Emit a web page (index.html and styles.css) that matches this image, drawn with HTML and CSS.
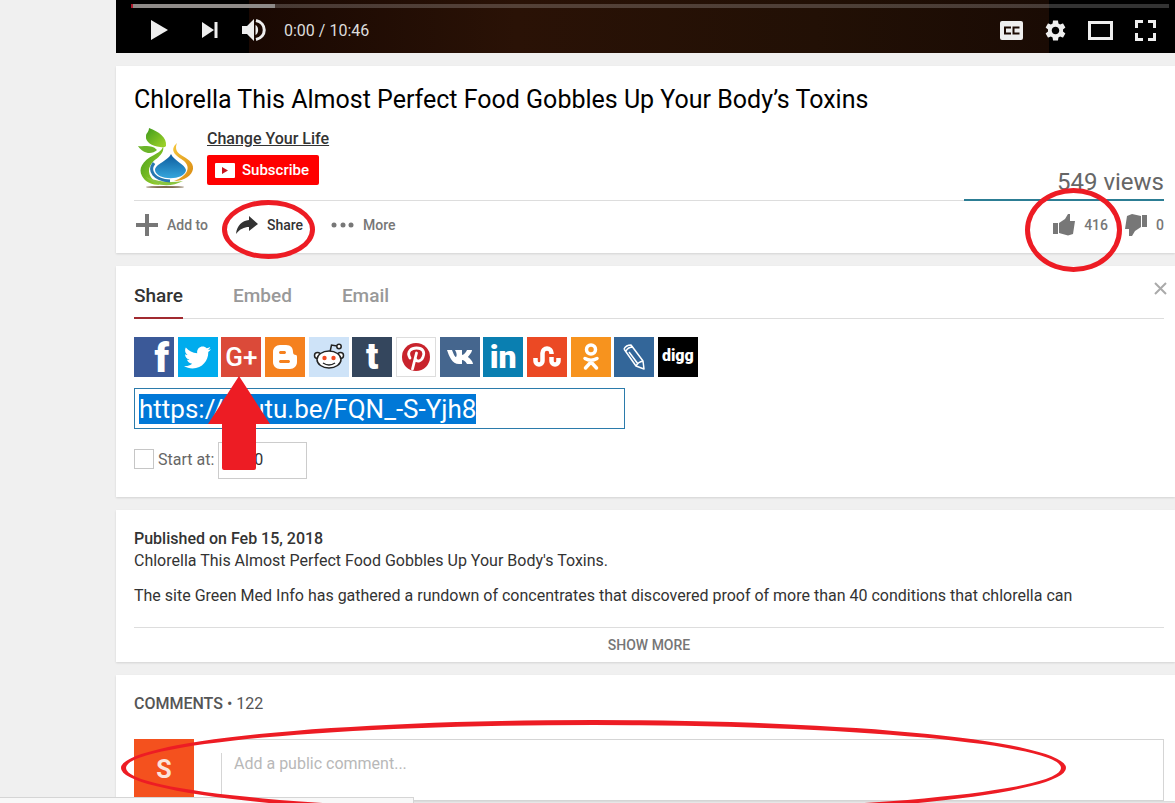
FILE: index.html
```html
<!DOCTYPE html>
<html lang="en">
<head>
    <meta charset="UTF-8">
    <meta name="viewport" content="width=device-width, initial-scale=1.0">
    <title>Chlorella This Almost Perfect Food Gobbles Up Your Body’s Toxins</title>
    <link rel="stylesheet" href="styles.css">
</head>
<body>
<main class="page">
    <!-- Player controls -->
    <section class="player">
        <div class="progress"><div class="loaded"></div></div>
        <div class="controls">
            <button class="ctl play" aria-label="Play"><svg width="17" height="20" viewBox="0 0 17 20"><path d="M0 0L17 10L0 20Z"/></svg></button>
            <button class="ctl next" aria-label="Next"><svg width="16" height="16" viewBox="0 0 16 16"><path d="M0 0L12 8L0 16ZM12.500 0H15.500V16H12.500Z"/></svg></button>
            <button class="ctl volume" aria-label="Mute"><svg width="24" height="22" viewBox="0 0 24 22"><path d="M0 7H5L12 0V22L5 15H0Z"/><path d="M13.500 6C17 7.500 17 14.500 13.500 16Z"/><path d="M14 1.500C25 4 25 18 14 20.500" class="wave"/></svg></button>
            <span class="time">0:00 / 10:46</span>
            <div class="controls-right">
                <button class="ctl" aria-label="Subtitles"><svg width="23" height="19" viewBox="0 0 23 19"><rect width="23" height="19" rx="2"/><path class="cc" d="M10 7.500V6.500H5V12.500H10V11.500M18.500 7.500V6.500H13.500V12.500H18.500V11.500"/></svg></button>
                <button class="ctl" aria-label="Settings"><svg width="21" height="21" viewBox="2 2 20 20"><path d="M19.140 12.940c.04-.3.06-.61.06-.94 0-.32-.02-.64-.07-.94l2.030-1.580c.18-.14.23-.41.12-.61l-1.920-3.320c-.12-.22-.37-.29-.59-.22l-2.390.96c-.5-.38-1.030-.7-1.620-.94l-.36-2.540c-.04-.24-.24-.41-.48-.41h-3.840c-.24 0-.43.17-.47.41l-.36 2.540c-.59.24-1.130.57-1.620.94l-2.390-.96c-.22-.08-.47 0-.59.22L2.740 8.870c-.12.21-.08.47.12.61l2.030 1.580c-.05.3-.09.63-.09.94s.02.64.07.94l-2.030 1.580c-.18.14-.23.41-.12.61l1.920 3.320c.12.22.37.29.59.22l2.390-.96c.5.38 1.030.7 1.620.94l.36 2.540c.05.24.24.41.48.41h3.840c.24 0 .44-.17.47-.41l.36-2.540c.59-.24 1.130-.56 1.620-.94l2.390.96c.22.08.47 0 .59-.22l1.920-3.320c.12-.22.07-.47-.12-.61l-2.010-1.580zM12 15.600c-1.980 0-3.600-1.620-3.600-3.600s1.620-3.600 3.600-3.600 3.600 1.620 3.600 3.600-1.620 3.600-3.600 3.600z"/></svg></button>
                <button class="ctl" aria-label="Theater mode"><svg width="25" height="19" viewBox="0 0 25 19"><path d="M0 0H25V19H0ZM3 3V16H22V3Z" fill-rule="evenodd"/></svg></button>
                <button class="ctl" aria-label="Full screen"><svg width="21" height="21" viewBox="0 0 21 21"><path d="M0 0H8V3H3V8H0ZM13 0H21V8H18V3H13ZM0 13H3V18H8V21H0ZM18 13H21V21H13V18H18Z"/></svg></button>
            </div>
        </div>
    </section>

    <!-- Title and actions -->
    <section class="card info">
        <h1>Chlorella This Almost Perfect Food Gobbles Up Your Body’s Toxins</h1>
        <div class="channel">
            <svg class="channel-logo" width="60" height="60" viewBox="0 0 60 60" role="img" aria-label="Change Your Life">
                <defs>
                    <linearGradient id="drop" x1="0" y1="0" x2="0" y2="1"><stop offset="0" stop-color="#0c5a9c"/><stop offset="1" stop-color="#36a6dc"/></linearGradient>
                    <linearGradient id="leaf" x1="0" y1="0" x2="1" y2="1"><stop offset="0" stop-color="#3f9a1c"/><stop offset="1" stop-color="#a5d62a"/></linearGradient>
                    <linearGradient id="gold" x1="0" y1="0" x2="1" y2="1"><stop offset="0" stop-color="#f5c63c"/><stop offset="1" stop-color="#d98a12"/></linearGradient>
                </defs>
                <path fill="url(#leaf)" d="M15 0C25 4 33 9 32 18Q31 20 26 19C18 18 11 14 12 8C12 5 15 4 15 0Z"/>
                <path fill="#6cb52a" d="M4 18C11 19 17 16 23 22C18 27 9 26 4 18Z"/>
                <path fill="url(#leaf)" d="M28 14C31 20 27 23 20 27C8 33 4 41 8 48C11 54 18 57 26 57C15 51 12 42 18 35C23 29 33 26 28 14Z"/>
                <path fill="#8bc53f" d="M12 49C20 58 36 60 49 53C37 55 24 54 12 49Z"/>
                <path fill="none" stroke="#2877b0" stroke-width="3" d="M20 35C14 43 20 52 36 53"/>
                <path fill="url(#gold)" d="M43 15C34 23 43 28 50 33C57 39 54 48 40 53C51 53 58 47 59 41C60 34 52 30 47 27C42 24 41 20 43 15Z"/>
                <path fill="url(#drop)" d="M37 26C34 33 21 36 21 42C22 53 51 53 52 42C51 36 40 33 37 26Z"/>
                <ellipse cx="31" cy="59" rx="19" ry="1" fill="#806b50"/>
            </svg>
            <div class="channel-text">
                <a href="#" class="channel-name">Change Your Life</a>
                <button class="subscribe"><svg width="20" height="15" viewBox="0 0 20 15"><rect width="20" height="15" rx="1" fill="#fff"/><path d="M7 4L13 7.500L7 11Z" fill="#c8141c"/></svg>Subscribe</button>
            </div>
            <div class="views">549 views</div>
        </div>
        <div class="actions">
            <button class="action"><svg width="22" height="22" viewBox="0 0 22 22"><path d="M9 0H13V9H22V13H13V22H9V13H0V9H9Z"/></svg>Add to</button>
            <button class="action active"><svg width="22" height="22" viewBox="0 0 22 22"><path d="M13 2L22 10L13 17V13C8 13 4 15 0 20C1 11 6 7 13 6Z"/></svg>Share<span class="ring share-ring"></span></button>
            <button class="action"><svg width="23" height="22" viewBox="0 0 23 22"><circle cx="3" cy="11" r="2.500"/><circle cx="12" cy="11" r="2.500"/><circle cx="20" cy="11" r="2.500"/></svg>More</button>
            <div class="votes">
                <button class="action"><svg width="22" height="22" viewBox="0 0 22 22"><path d="M0 9H5V20H0ZM6 9L12 5L15 0H17V7H22L20 20L15 21.500L6 19Z"/></svg>416<span class="ring like-ring"></span></button>
                <button class="action"><svg width="22" height="22" viewBox="0 0 22 22"><path d="M22 13H17V1H22ZM16 13L10 17L7 22H4V15H0L2 2L7 0L16 2Z"/></svg>0</button>
            </div>
        </div>
    </section>

    <!-- Share panel -->
    <section class="card share">
        <div class="tabs">
            <button class="tab selected">Share</button>
            <button class="tab">Embed</button>
            <button class="tab">Email</button>
            <button class="close" aria-label="Close"><svg width="13" height="13" viewBox="0 0 13 13"><path d="M1 1L12 12M12 1L1 12"/></svg></button>
        </div>
        <div class="services">
            <button class="service facebook">f</button>
            <button class="service twitter" aria-label="Twitter"><svg width="27" height="27" viewBox="0 0 24 24"><path fill="#fff" d="M23.954 4.569c-.885.389-1.830.654-2.825.775 1.014-.611 1.794-1.574 2.163-2.723-.951.555-2.005.959-3.127 1.184-.896-.959-2.173-1.559-3.591-1.559-2.717 0-4.920 2.203-4.920 4.917 0 .39.045.765.127 1.124C7.691 8.094 4.066 6.130 1.640 3.161c-.427.722-.666 1.561-.666 2.475 0 1.710.87 3.213 2.188 4.096-.807-.026-1.566-.248-2.228-.616v.061c0 2.385 1.693 4.374 3.946 4.827-.413.111-.849.171-1.296.171-.314 0-.615-.03-.916-.086.631 1.953 2.445 3.377 4.604 3.417-1.680 1.319-3.809 2.105-6.102 2.105-.39 0-.779-.023-1.170-.067 2.189 1.394 4.768 2.209 7.557 2.209 9.054 0 13.999-7.496 13.999-13.986 0-.209 0-.42-.015-.63.961-.689 1.800-1.560 2.460-2.548z"/></svg></button>
            <button class="service google">G+</button>
            <button class="service blogger" aria-label="Blogger"><svg width="26" height="26" viewBox="0 0 26 26"><path fill="#fff" fill-rule="evenodd" d="M8 1H14C19 1 21 4 21 8C21 10 22 11 24 11Q25 11 25 13V18C25 22 22 25 18 25H8C4 25 1 22 1 18V8C1 4 4 1 8 1ZM8 7Q6 8.500 8 10H13Q15 8.500 13 7ZM8 16Q6 17.500 8 19H17Q19 17.500 17 16Z"/></svg></button>
            <button class="service reddit" aria-label="Reddit"><svg width="32" height="32" viewBox="0 0 32 32"><g fill="#fff" stroke="#222" stroke-width="1.500"><path fill="none" d="M17 11L18.500 4L24 5"/><circle cx="26" cy="5.500" r="2.200"/><circle cx="4.500" cy="14.500" r="3"/><circle cx="27.500" cy="14.500" r="3"/><ellipse cx="16" cy="18.500" rx="12" ry="8.500"/><path fill="none" d="M10 22Q16 26 22 22"/></g><circle cx="11.500" cy="17" r="2.200" fill="#f04b23"/><circle cx="20.500" cy="17" r="2.200" fill="#f04b23"/></svg></button>
            <button class="service tumblr">t</button>
            <button class="service pinterest" aria-label="Pinterest"><svg width="28" height="28" viewBox="0 0 28 28"><circle cx="14" cy="14" r="14" fill="#c8232c"/><path fill="none" stroke="#fff" stroke-width="2.800" stroke-linecap="round" d="M8 15C4 8 10 5 14.500 5C21 5 23 9 21 14C19 19 14.500 19 13.500 16M14.500 10L10.500 26"/></svg></button>
            <button class="service vk" aria-label="VK"><svg width="26" height="16" viewBox="0 0 26 16"><path fill="#fff" d="M0 1H5C7 6 8 8 9 8C10 7 10 4 8 1H15V6C17 6 19 3 20 1H25C25 4 21 7 21 8C22 9 26 12 26 15H20C18 12 17 11 15 11V15H12C5 15 2 7 0 1Z"/></svg></button>
            <button class="service linkedin">in</button>
            <button class="service stumble" aria-label="StumbleUpon"><svg width="28" height="22" viewBox="0 0 28 22"><path fill="none" stroke="#fff" stroke-width="4.500" d="M2.500 12V15A3.500 3.500 0 0 0 9.500 15V7A4.500 4.500 0 0 1 18.500 7V8M18.500 11V15A3.500 3.500 0 0 0 25.500 15V12"/></svg></button>
            <button class="service ok" aria-label="Odnoklassniki"><svg width="18" height="28" viewBox="0 0 18 28"><g fill="none" stroke="#fff" stroke-width="3.500" stroke-linecap="round"><circle cx="9" cy="6.500" r="4.500"/><path d="M3 15.500Q9 19 15 15.500M9 19L3.500 25M9 19L14.500 25"/></g></svg></button>
            <button class="service livejournal" aria-label="LiveJournal"><svg width="24" height="28" viewBox="0 0 24 28"><path fill="none" stroke="#fff" stroke-width="1.500" stroke-linejoin="round" d="M2 6Q4 2 9 2L21 18L22 26L14 23L2 6M4 8Q6 4 11 4M14 23Q16 19 21 18M7 9L16 21"/></svg></button>
            <button class="service digg">digg</button>
        </div>
        <input class="share-url" id="share-url" type="text" aria-label="Video link" value="https://youtu.be/FQN_-S-Yjh8">
        <div class="start">
            <input type="checkbox" id="start-at" class="start-check">
            <label for="start-at">Start at:</label>
            <input type="text" class="start-time" aria-label="Start time" value="0:00">
        </div>
        <svg class="pointer" width="62" height="94" viewBox="0 0 62 94"><path fill="#ed1c24" d="M31 0L62 48H48V92Q48 94 46 94H16Q14 94 14 92V48H0Z"/></svg>
    </section>

    <!-- Description -->
    <section class="card description">
        <p class="published">Published on Feb 15, 2018</p>
        <p>Chlorella This Almost Perfect Food Gobbles Up Your Body's Toxins.</p>
        <p class="more-text">The site Green Med Info has gathered a rundown of concentrates that discovered proof of more than 40 conditions that chlorella can</p>
        <button class="show-more">SHOW MORE</button>
    </section>

    <!-- Comments -->
    <section class="card comments">
        <h2>COMMENTS <span>• 122</span></h2>
        <div class="comment-row">
            <div class="user">S</div>
            <div class="comment-field">
                <textarea class="comment-box" aria-label="Comment" placeholder="Add a public comment..."></textarea>
            </div>
        </div>
        <span class="ring comment-ring"></span>
    </section>
</main>
<div class="status"></div>

<script>
    const shareUrl = document.getElementById("share-url");
    shareUrl.focus();
    shareUrl.select();
</script>
</body>
</html>
```
FILE: styles.css
```css
* {
    box-sizing: border-box;
}

body {
    margin: 0;
    height: 100vh;
    overflow: hidden;
    background: #f0f0f0;
    color: #333;
    font-family: Roboto, "Liberation Sans", sans-serif;
    font-size: 16px;
}

h1, h2, p {
    margin: 0;
}

button {
    padding: 0;
    border: none;
    background: none;
    font-family: inherit;
    cursor: pointer;
}

input, textarea {
    font-family: inherit;
}

svg {
    display: block;
    flex: none;
}

.page {
    margin-left: 116px;
    display: flex;
    flex-direction: column;
    gap: 13px;
}

/* Player */
.player {
    height: 53px;
    padding: 4px 6px 0 15px;
    background: linear-gradient(90deg, #000 133px, #190802 133px, #2a1206 400px, #221005 700px, #1a0b04 933px, #000 933px);
}

.progress {
    height: 4px;
    background: rgba(255, 255, 255, 0.2);
}

.loaded {
    width: 144px;
    height: 4px;
    background: #8e8a88;
    border-left: 2px solid #b0182c;
}

.controls {
    display: flex;
    align-items: center;
    height: 44px;
    padding: 0 13px 0 20px;
}

.ctl svg {
    fill: #eee;
}

.next {
    margin-left: 34px;
}

.volume {
    margin: 0 18px 0 24px;
}

.wave {
    fill: none;
    stroke: #eee;
    stroke-width: 3;
}

.ctl .cc {
    fill: none;
    stroke: #1c0a02;
    stroke-width: 2;
}

.time {
    color: #ddd;
}

.controls-right {
    display: flex;
    align-items: center;
    gap: 22px;
    margin-left: auto;
}

/* Cards */
.card {
    position: relative;
    padding: 18px 11px 0 18px;
    background: #fff;
    box-shadow: 0 1px 2px rgba(0, 0, 0, 0.12);
}

.info {
    padding-bottom: 4px;
}

h1 {
    color: #000;
    font-size: 25px;
    font-weight: 400;
    line-height: 32px;
    white-space: nowrap;
}

.channel {
    display: flex;
    height: 73px;
    margin-top: 12px;
    border-bottom: 1px solid #ddd;
}

.channel-text {
    margin-left: 13px;
}

.channel-name {
    display: block;
    margin-bottom: 5px;
    color: #333;
    font-weight: 500;
    line-height: 22px;
}

.subscribe {
    display: flex;
    align-items: center;
    gap: 7px;
    height: 30px;
    padding: 0 10px 0 8px;
    border-radius: 2px;
    background: #f00;
    color: #fff;
    font-size: 15px;
    font-weight: 500;
}

.views {
    align-self: flex-end;
    width: 200px;
    margin: 0 0 -1px auto;
    border-bottom: 2px solid #2c7d94;
    color: #666;
    font-size: 24px;
    line-height: 34px;
    text-align: right;
}

.actions {
    display: flex;
    gap: 28px;
    height: 48px;
    padding-left: 2px;
}

.action {
    position: relative;
    display: flex;
    align-items: center;
    gap: 9px;
    color: #777;
    font-size: 14px;
    font-weight: 500;
}

.action svg {
    fill: #777;
}

.active {
    color: #333;
}

.active svg {
    fill: #333;
}

.votes {
    display: flex;
    gap: 17px;
    margin-left: auto;
}

/* Red marks */
.ring {
    position: absolute;
    z-index: 5;
    border: 5px solid #ed1c24;
    border-radius: 50%;
    pointer-events: none;
}

.share-ring {
    top: -1px;
    left: -14px;
    width: 93px;
    height: 59px;
}

.like-ring {
    top: -13px;
    left: -28px;
    width: 97px;
    height: 84px;
}

.comment-ring {
    top: 45px;
    left: 5px;
    right: 109px;
    height: 96px;
}

.pointer {
    position: absolute;
    top: 110px;
    left: 92px;
}

/* Share panel */
.share {
    padding: 9px 11px 18px 18px;
}

.tabs {
    display: flex;
    gap: 50px;
    height: 44px;
    border-bottom: 1px solid #ddd;
}

.tab {
    height: 44px;
    padding-bottom: 2px;
    border-bottom: 2px solid transparent;
    color: #999;
    font-size: 19px;
    font-weight: 500;
}

.selected {
    border-color: #a12a30;
    color: #333;
}

.close {
    align-self: flex-start;
    margin: 7px -3px 0 auto;
}

.close path {
    fill: none;
    stroke: #aaa;
    stroke-width: 2;
}

.services {
    display: flex;
    justify-content: space-between;
    width: 564px;
    margin-top: 18px;
}

.service {
    display: flex;
    align-items: center;
    justify-content: center;
    width: 40px;
    height: 40px;
    color: #fff;
    font-weight: 900;
}

.facebook {
    justify-content: flex-end;
    padding: 4px 5px 0 0;
    background: #3b5998;
    font-size: 40px;
    line-height: 36px;
}

.twitter { background: #00aced; }
.google { background: #db4a39; font-size: 26px; font-weight: 500; }
.blogger { background: #f5811f; }
.reddit { background: #cee3f8; }
.tumblr { background: #34465d; font-size: 36px; line-height: 36px; }
.pinterest { border: 1px solid #ddd; background: #fff; }
.vk { background: #45668e; }
.linkedin { background: #0a7fb1; font-size: 32px; line-height: 32px; }
.stumble { background: #eb4924; }
.ok { background: #f7931e; }
.livejournal { background: #336699; }
.digg { padding-bottom: 3px; background: #000; font-size: 16px; }

.share-url {
    display: block;
    width: 491px;
    height: 41px;
    margin-top: 11px;
    padding: 0 4px;
    border: 1px solid #2b7bab;
    outline: none;
    color: #333;
    font-size: 26px;
}

.share-url::selection {
    background: #0078d7;
    color: #fff;
}

.start {
    display: flex;
    align-items: center;
    gap: 4px;
    margin-top: 13px;
    color: #666;
}

.start-check {
    appearance: none;
    width: 20px;
    height: 20px;
    margin: 0 0 4px;
    border: 1px solid #c6c6c6;
}

.start label {
    padding-bottom: 2px;
}

.start-time {
    width: 89px;
    height: 37px;
    padding: 0 13px 2px;
    border: 1px solid #ccc;
    color: #333;
    font-size: 16px;
}

/* Description */
.description p {
    line-height: 22px;
}

.description .published {
    font-weight: 500;
}

.description .more-text {
    margin-top: 13px;
}

.show-more {
    display: block;
    width: 100%;
    height: 35px;
    margin-top: 20px;
    border-top: 1px solid #ddd;
    color: #767676;
    font-size: 14px;
    font-weight: 500;
}

/* Comments */
.comments h2 {
    color: #555;
    font-size: 16px;
    font-weight: 500;
    line-height: 22px;
}

.comments h2 span {
    font-weight: 400;
}

.comment-row {
    display: flex;
    gap: 27px;
    margin-top: 24px;
}

.user {
    width: 60px;
    height: 60px;
    background: #f4511e;
    color: #fbe3db;
    font-size: 25px;
    font-weight: 700;
    line-height: 62px;
    text-align: center;
}

.comment-field {
    position: relative;
    flex: 1;
}

/* opening in the left border beside the avatar */
.comment-field::before {
    content: "";
    position: absolute;
    top: 1px;
    left: 0;
    width: 1px;
    height: 13px;
    background: #fff;
}

.comment-box {
    display: block;
    width: 100%;
    height: 62px;
    padding: 14px 12px;
    border: 1px solid #d5d5d5;
    font-size: 16px;
    resize: none;
}

.comment-box::placeholder {
    color: #b8b8b8;
}

/* Link preview bar of the browser */
.status {
    position: fixed;
    bottom: 0;
    left: 0;
    width: 414px;
    height: 6px;
    border: 1px solid #d5d5d5;
    border-width: 1px 1px 0 0;
    background: #f8f8f8;
}
```
